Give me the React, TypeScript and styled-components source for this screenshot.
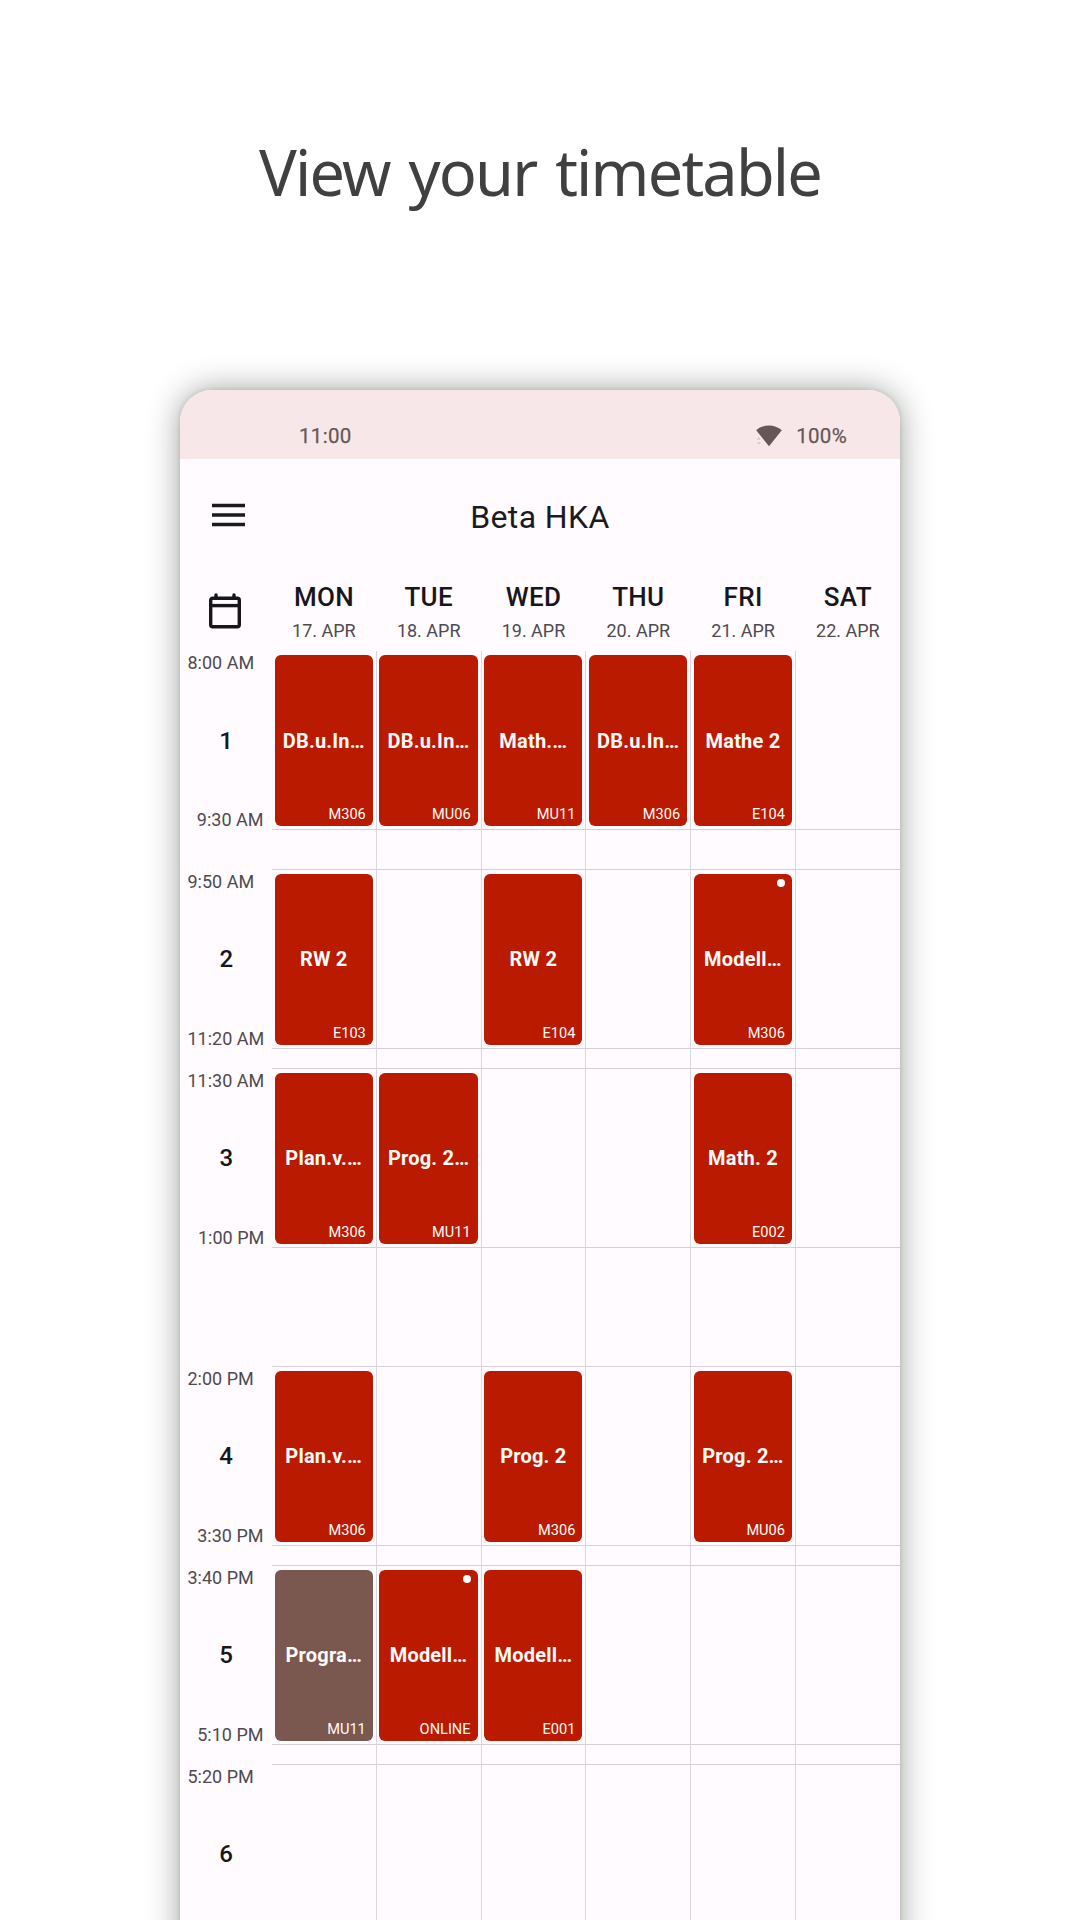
import React from "react";
import styled, { createGlobalStyle } from "styled-components";

const GlobalStyle = createGlobalStyle`
  * { box-sizing: border-box; }
  html, body { margin: 0; padding: 0; background: #fff; }
  body { overflow: hidden; }
`;

const Page = styled.main`
  width: 1080px;
  height: 1920px;
  overflow: hidden;
  display: flex;
  flex-direction: column;
  align-items: center;
  background: #ffffff;
  font-family: Roboto, "Liberation Sans", sans-serif;
`;

const Headline = styled.h1`
  margin: 0;
  height: 390px;
  flex: none;
  padding-top: 127px;
  font: 400 63px/90px "Noto Sans", "Open Sans", sans-serif;
  letter-spacing: -1.8px;
  word-spacing: 4.2px;
  color: #404040;
  white-space: nowrap;
`;

const Phone = styled.section`
  width: 720px;
  height: 1600px;
  flex: none;
  display: flex;
  flex-direction: column;
  border-radius: 32px 32px 0 0;
  background: #fffbff;
  box-shadow: 0 0 4px rgba(30, 40, 20, 0.14), 0 0 32px rgba(20, 30, 20, 0.42);
  overflow: hidden;
`;

const StatusBar = styled.div`
  height: 69px;
  flex: none;
  display: flex;
  align-items: center;
  padding: 22px 53px 0 119px;
  background: #f8e7e8;
  color: #655756;
  font-size: 20.5px;
  font-weight: 400;
  line-height: 24px;
  letter-spacing: 0.3px;
  -webkit-text-stroke: 0.25px #655756;
`;

const StatusRight = styled.div`
  margin-left: auto;
  display: flex;
  align-items: center;
  gap: 13px;
`;

const AppBar = styled.header`
  height: 115px;
  flex: none;
  display: grid;
  grid-template-columns: 96px 1fr 96px;
  align-items: center;
  color: #1b1a1f;
`;

const MenuButton = styled.div`
  display: flex;
  justify-content: center;
  align-items: center;
  padding-bottom: 4px;
`;

const AppTitle = styled.div`
  padding-top: 1px;
  text-align: center;
  font-size: 32px;
  line-height: 40px;
  letter-spacing: 0.4px;
`;

const DayHeader = styled.div`
  height: 77px;
  flex: none;
  display: flex;
`;

const CalendarCell = styled.div`
  width: 91.5px;
  flex: none;
  padding: 19px 0 0 29px;
`;

const Day = styled.div`
  width: 104.8px;
  flex: none;
  text-align: center;
`;

const DayName = styled.div`
  padding-top: 8px;
  font-size: 26px;
  line-height: 30px;
  font-weight: 500;
  letter-spacing: 0.3px;
  color: #17161b;
`;

const DayDate = styled.div`
  margin-top: 8px;
  font-size: 18px;
  line-height: 22px;
  color: #4e4a50;
`;

const Row = styled.div<{ $h: number }>`
  height: ${(p) => p.$h}px;
  flex: none;
  display: flex;
`;

const TimeColumn = styled.div`
  width: 92px;
  flex: none;
  display: grid;
  grid-template-rows: 21px 1fr 21px;
  padding: 1px 8.5px 0 7.5px;
  font-size: 18px;
  line-height: 21px;
  color: #4e4a50;
  white-space: nowrap;
`;

const EndTime = styled.div`
  text-align: right;
`;

const Period = styled.div`
  align-self: center;
  text-align: center;
  padding: 0 0 1px 1px;
  font-size: 24px;
  line-height: 28px;
  font-weight: 500;
  color: #17161b;
`;

const Cell = styled.div`
  width: 104.8px;
  flex: none;
  padding: 4px 3px 3px 2.7px;
  border-right: 1px solid #dbd6dd;
  border-bottom: 1px solid #d6d1d8;
  &:last-child { border-right: 0; }
`;

const Lesson = styled.div<{ $muted?: boolean }>`
  height: 100%;
  display: grid;
  grid-template-rows: 1fr 24px 1fr;
  padding: 0 7px;
  border-radius: 6px;
  background: ${(p) => (p.$muted ? "#7a574f" : "#ba1a00")};
  color: #fffaf7;
`;

const Dot = styled.i`
  justify-self: end;
  width: 8px;
  height: 8px;
  margin-top: 5.5px;
  border-radius: 50%;
  background: #fff;
`;

const LessonTitle = styled.div`
  grid-row: 2;
  display: flex;
  justify-content: center;
  font-size: 20px;
  line-height: 24px;
  font-weight: 700;
  letter-spacing: 0.2px;
  white-space: nowrap;
`;

const Room = styled.div`
  grid-row: 3;
  align-self: end;
  text-align: right;
  font-size: 14.6px;
  line-height: 18px;
  padding-bottom: 3px;
`;

type Entry = { title: string; room: string; muted?: boolean; dot?: boolean };
type Slot = { start: string; end: string; gapAfter: number; entries: (Entry | null)[] };

const e = (title: string, room: string, extra: Partial<Entry> = {}): Entry => ({ title, room, ...extra });

const days = [
  ["MON", "17. APR"],
  ["TUE", "18. APR"],
  ["WED", "19. APR"],
  ["THU", "20. APR"],
  ["FRI", "21. APR"],
  ["SAT", "22. APR"],
];

const slots: Slot[] = [
  {
    start: "8:00 AM", end: "9:30 AM", gapAfter: 20,
    entries: [e("DB.u.In…", "M306"), e("DB.u.In…", "MU06"), e("Math.…", "MU11"), e("DB.u.In…", "M306"), e("Mathe 2", "E104"), null],
  },
  {
    start: "9:50 AM", end: "11:20 AM", gapAfter: 10,
    entries: [e("RW 2", "E103"), null, e("RW 2", "E104"), null, e("Modell…", "M306", { dot: true }), null],
  },
  {
    start: "11:30 AM", end: "1:00 PM", gapAfter: 60,
    entries: [e("Plan.v.…", "M306"), e("Prog. 2…", "MU11"), null, null, e("Math. 2", "E002"), null],
  },
  {
    start: "2:00 PM", end: "3:30 PM", gapAfter: 10,
    entries: [e("Plan.v.…", "M306"), null, e("Prog. 2", "M306"), null, e("Prog. 2…", "MU06"), null],
  },
  {
    start: "3:40 PM", end: "5:10 PM", gapAfter: 10,
    entries: [e("Progra…", "MU11", { muted: true }), e("Modell…", "ONLINE", { dot: true }), e("Modell…", "E001"), null, null, null],
  },
  { start: "5:20 PM", end: "", gapAfter: 10, entries: [null, null, null, null, null, null] },
];

const PX_PER_MINUTE = 1.989;

const WifiIcon = () => (
  <svg width="28" height="24" viewBox="0 0 28 24">
    <path d="M1.2 6.2C8.5-.1 19.5-.1 26.8 6.2L14 22.3Z" fill="#655756" />
    <path d="M2 15.4l1.8-1.8 1.8 1.8zM2 18.4h4l-2 1.8z" fill="#cbbcbc" />
  </svg>
);

const MenuIcon = () => (
  <svg width="33" height="24" viewBox="0 0 33 24">
    <path d="M0 2.5h33M0 12h33M0 21.5h33" stroke="#1b1a1f" strokeWidth="3.7" />
  </svg>
);

const CalendarIcon = () => (
  <svg width="32" height="36" viewBox="0 0 32 36">
    <rect x="1.7" y="5.2" width="28.6" height="28.6" rx="2" fill="none" stroke="#17161b" strokeWidth="3.4" />
    <path d="M2 12.6h28" stroke="#17161b" strokeWidth="3.4" />
    <path d="M7 5V2M25 5V2" stroke="#17161b" strokeWidth="3.4" strokeLinecap="round" />
  </svg>
);

export default function App() {
  return (
    <Page>
      <GlobalStyle />
      <Headline>View your timetable</Headline>
      <Phone>
        <StatusBar>
          <span>11:00</span>
          <StatusRight>
            <WifiIcon />
            <span>100%</span>
          </StatusRight>
        </StatusBar>
        <AppBar>
          <MenuButton><MenuIcon /></MenuButton>
          <AppTitle>Beta HKA</AppTitle>
        </AppBar>
        <DayHeader>
          <CalendarCell><CalendarIcon /></CalendarCell>
          {days.map(([name, date]) => (
            <Day key={name}>
              <DayName>{name}</DayName>
              <DayDate>{date}</DayDate>
            </Day>
          ))}
        </DayHeader>
        {slots.map((slot, i) => (
          <React.Fragment key={slot.start}>
            <Row $h={90 * PX_PER_MINUTE}>
              <TimeColumn>
                <div>{slot.start}</div>
                <Period>{i + 1}</Period>
                <EndTime>{slot.end}</EndTime>
              </TimeColumn>
              {slot.entries.map((entry, d) => (
                <Cell key={d}>
                  {entry && (
                    <Lesson $muted={entry.muted}>
                      {entry.dot && <Dot />}
                      <LessonTitle>{entry.title}</LessonTitle>
                      <Room>{entry.room}</Room>
                    </Lesson>
                  )}
                </Cell>
              ))}
            </Row>
            {i < slots.length - 1 && (
              <Row $h={slot.gapAfter * PX_PER_MINUTE}>
                <TimeColumn />
                {days.map(([name]) => <Cell key={name} />)}
              </Row>
            )}
          </React.Fragment>
        ))}
      </Phone>
    </Page>
  );
}
